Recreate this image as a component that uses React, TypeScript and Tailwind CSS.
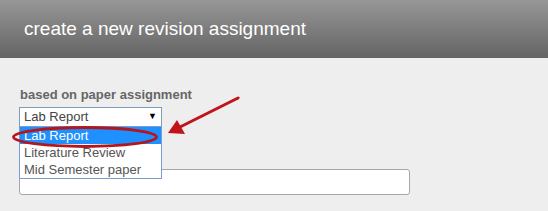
import React from "react";

const options = ["Lab Report", "Literature Review", "Mid Semester paper"];

export default function App() {
  return (
    <div
      className="relative w-[548px] h-[211px] overflow-hidden bg-[#eeeeee]"
      style={{ fontFamily: '"Liberation Sans", Arial, sans-serif' }}
    >
      {/* header */}
      <div className="h-[58px] bg-gradient-to-b from-[#979797] to-[#646464] flex items-center pl-[24px]">
        <h1 className="text-[19px] text-white leading-none pb-[2px]">create a new revision assignment</h1>
      </div>

      {/* form */}
      <div className="pl-[19px] pt-[29px]">
        <label className="block pl-[1px] text-[13px] font-bold text-[#666666] leading-[16px]">
          based on paper assignment
        </label>
        <div className="relative mt-[4px] w-[143px]">
          <div className="h-[20px] border border-[#7f9db9] bg-white flex items-center justify-between pl-[4px] pr-[4px] text-[13px] text-[#444444]">
            <span>Lab Report</span>
            <span className="text-[9px] text-black">▼</span>
          </div>
          {/* open dropdown list */}
          <div className="absolute left-0 top-[19px] z-10 w-[143px] border border-[#7a9cd3] bg-white text-[13px] leading-[17px]">
            {options.map((o, i) => (
              <div
                key={o}
                className={
                  i === 0
                    ? "h-[17px] pl-[4px] bg-[#1e90ff] text-white"
                    : "h-[17px] pl-[4px] text-[#555555]"
                }
              >
                {o}
              </div>
            ))}
          </div>
        </div>
        <div className="mt-[42px] w-[391px] h-[26px] bg-white border border-[#a6a6a6] rounded-[3px]" />
      </div>

      {/* annotation: red ellipse + arrow */}
      <svg className="absolute left-0 top-0 z-20 pointer-events-none" width="548" height="211">
        <ellipse cx="85" cy="137" rx="71.5" ry="9.5" fill="none" stroke="#b3161b" strokeWidth="2.8" />
        <line x1="238" y1="98" x2="180" y2="127" stroke="#c0141a" strokeWidth="3" strokeLinecap="round" />
        <polygon points="168,133 177,120 185,134" fill="#c0141a" />
      </svg>
    </div>
  );
}
